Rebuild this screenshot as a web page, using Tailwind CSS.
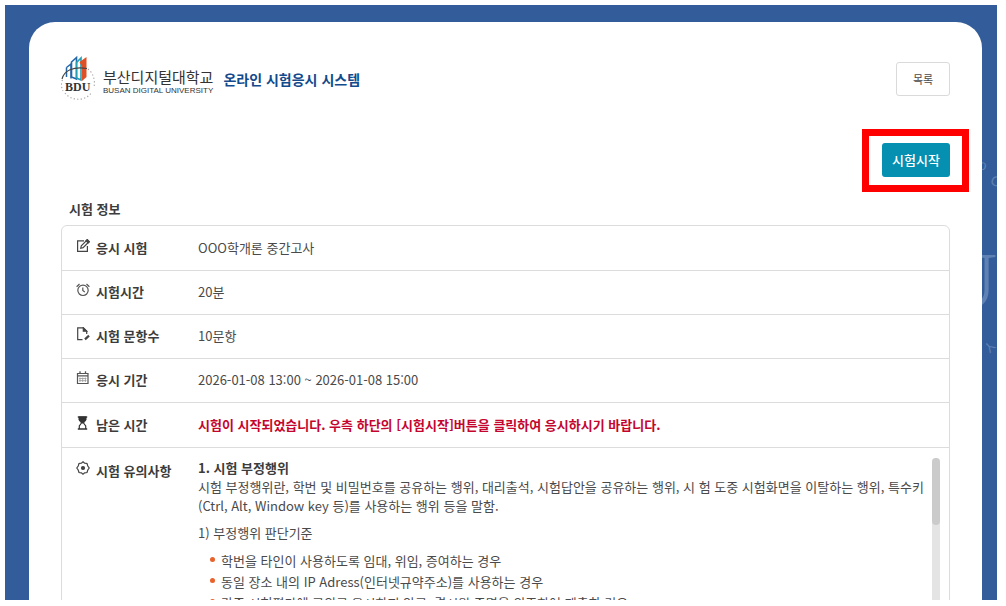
<!DOCTYPE html>
<html lang="ko">
<head>
  <meta charset="UTF-8" />
  <meta name="viewport" content="width=device-width, initial-scale=1.0"/>
  <title>온라인 시험응시 시스템</title>
  <script src="https://cdn.jsdelivr.net/npm/@tailwindcss/browser@4"></script>
</head>
<body class="h-screen bg-white pt-[5px] pr-[9px] pb-[6px] pl-[5px] font-['Noto_Sans_CJK_KR',sans-serif] text-[13px] text-[#4a4a4a]">
  <div class="relative h-full overflow-hidden bg-[#325d9a] pt-[17px] pr-[15px] pl-6">
    <!-- backdrop lettering -->
    <div aria-hidden="true" class="absolute inset-0 font-['Liberation_Serif',serif] text-[#5f81b3]">
      <span class="absolute right-0 top-[236px] text-[80px] leading-[80px]">U</span>
      <span class="absolute right-[10px] top-[152px] rotate-12 font-['Liberation_Sans',sans-serif] text-sm leading-4">o</span>
      <span class="absolute -right-[4px] top-[168px] rotate-20 font-['Liberation_Sans',sans-serif] text-sm leading-4">C</span>
      <span class="absolute right-[3px] top-[334px] rotate-135 font-['Liberation_Sans',sans-serif] text-sm leading-4">Y</span>
    </div>

    <main class="relative h-[800px] rounded-t-[26px] bg-white pt-[33px] pr-8 pl-8">
      <header class="flex h-12 items-center justify-between">
        <div class="flex items-center">
          <svg class="mr-2 h-12 w-[34px]" viewBox="0 0 34 48" fill="none">
            <path d="M5.500 12.500 10 9V23.500M5.500 12.500V22" stroke="#2466a8" stroke-width="1.500"/>
            <path d="M10.500 7 15.500 2.500V24L10.500 22Z" stroke="#2466a8" stroke-width="1.600"/>
            <path d="M15.500 7.500 20 3V25L15.500 23Z" stroke="#24a0b5" stroke-width="1.600"/>
            <path d="M18.500 7 25.500 2V22L21 26V12Z" fill="#de5126"/>
            <path d="M1 24C3 16 12 11 26 13.500" stroke="#444" stroke-width="1.100"/>
            <path d="M27 14C32 18 34.500 25 33 32M4 38C10 46 24 47 31 37M1.500 25C0 28 0 32 2 36" stroke="#aaa" stroke-width="1.200" stroke-dasharray="1.300 2.200"/>
            <text x="4" y="36" font-family="Liberation Serif" font-size="12" font-weight="700" fill="#333">BDU</text>
          </svg>
          <div class="pt-1 text-[#333]">
            <div class="text-[15px] leading-[18px]">부산디지털대학교</div>
            <div class="font-['Liberation_Sans',sans-serif] text-[8px] leading-[9px]">BUSAN DIGITAL UNIVERSITY</div>
          </div>
          <h1 class="ml-[10px] text-sm font-bold text-[#124a8c]">온라인 시험응시 시스템</h1>
        </div>
        <button type="button" class="h-[34px] w-[54px] rounded-[3px] border border-[#dadada] text-[11px]">목록</button>
      </header>

      <div class="mt-10 flex justify-end">
        <div class="relative">
          <button type="button" class="block h-[34px] w-[68px] rounded-[3px] bg-[#058fb1] text-[13px] font-medium text-white">시험시작</button>
          <span class="pointer-events-none absolute -top-[14px] -right-[19px] -bottom-[15px] -left-5 border-[7px] border-[#fe0000]"></span>
        </div>
      </div>

      <h2 class="mt-[22px] pl-2 leading-5 font-bold text-[#3c3c3c]">시험 정보</h2>

      <div class="mt-[6px] h-[500px] rounded-t-md border border-[#dcdcdc]">
        <table class="w-full table-fixed text-left">
          <colgroup><col class="w-[136px]"/><col/></colgroup>
          <tbody>
            <tr class="h-[44px] border-b border-[#dcdcdc]">
              <th scope="row" class="pl-[14px] font-bold text-[#3c3c3c]">
                <div class="flex items-center gap-[6px]">
                  <svg class="mb-1 size-[14px]" viewBox="0 0 14 14" fill="none" stroke="#444" stroke-width="1.2"><path d="M8 1.8H1.6V12.4H11.4V7"/><path d="M4.7 9.3 5.3 6.9 11 1.2 12.8 3 7.1 8.7Z"/><path d="m10 1.8 1.3-1.2L13.4 2.700 12.200 4Z" fill="#444"/></svg>
                  <span>응시 시험</span>
                </div>
              </th>
              <td>OOO학개론 중간고사</td>
            </tr>
            <tr class="h-[44px] border-b border-[#dcdcdc]">
              <th scope="row" class="pl-[14px] font-bold text-[#3c3c3c]">
                <div class="flex items-center gap-[6px]">
                  <svg class="mb-1 size-[14px]" viewBox="0 0 14 14" fill="none" stroke="#555" stroke-width="1.2"><circle cx="7" cy="7.300" r="5.200"/><path d="M6.800 4.500V7.500L8.800 9M.6 3.700 3.500 1M13.400 3.700 10.500 1"/></svg>
                  <span>시험시간</span>
                </div>
              </th>
              <td>20분</td>
            </tr>
            <tr class="h-[44px] border-b border-[#dcdcdc]">
              <th scope="row" class="pl-[14px] font-bold text-[#3c3c3c]">
                <div class="flex items-center gap-[6px]">
                  <svg class="mb-1 size-[14px]" viewBox="0 0 14 14" fill="none" stroke="#444" stroke-width="1.2"><path d="M6.500 12.700H1.700V.8H7.300L10.700 4.200V7"/><path d="M7.300.8V4.200H10.700Z" fill="#444"/><path d="m9 12.400 4-3.800" stroke-width="2.200"/></svg>
                  <span>시험 문항수</span>
                </div>
              </th>
              <td>10문항</td>
            </tr>
            <tr class="h-[44px] border-b border-[#dcdcdc]">
              <th scope="row" class="pl-[14px] font-bold text-[#3c3c3c]">
                <div class="flex items-center gap-[6px]">
                  <svg class="mb-1 size-[14px]" viewBox="0 0 14 14" fill="none" stroke="#555"><path d="M1.500 2.500H12V12.500H1.500ZM1.500 4.800H12" stroke-width="1.200"/><path d="M4 .3V3M9.500.3V3" stroke-width="1.300"/><path d="M4 6.500V11M6.700 6.500V11M9.400 6.500V11M3 7.500H10.500M3 9.600H10.500" stroke="#999" stroke-width=".8"/></svg>
                  <span>응시 기간</span>
                </div>
              </th>
              <td>2026-01-08 13:00 ~ 2026-01-08 15:00</td>
            </tr>
            <tr class="h-[45px] border-b border-[#dcdcdc]">
              <th scope="row" class="pl-[14px] font-bold text-[#3c3c3c]">
                <div class="flex items-center gap-[6px]">
                  <svg class="mb-1 size-[14px]" viewBox="0 0 14 14" fill="none" stroke="#333"><path d="M1.800 1H11.200M1.800 13H11.200" stroke-width="1.400"/><path d="M3 1H10V4L7.500 7H5.500L3 4Z" fill="#333"/><path d="M5.500 7 3.300 10V13M7.500 7 9.700 10V13" stroke-width="1.200"/></svg>
                  <span>남은 시간</span>
                </div>
              </th>
              <td class="font-bold text-[#c4052e]">시험이 시작되었습니다. 우측 하단의 [시험시작]버튼을 클릭하여 응시하시기 바랍니다.</td>
            </tr>
            <tr class="align-top">
              <th scope="row" class="pt-[13px] pl-[14px] font-bold text-[#3c3c3c]">
                <div class="flex items-center gap-[6px]">
                  <svg class="mb-1 size-[14px]" viewBox="0 0 14 14" fill="none" stroke="#444" stroke-width="1.200"><path d="M7 .8 8.600 2.200 11 2.500 11.800 5 13.200 7 11.800 9 11 11.500 8.600 11.800 7 13.200 5.400 11.800 3 11.500 2.200 9 .8 7 2.200 5 3 2.500 5.400 2.200Z"/><circle cx="7" cy="7" r="1.500" fill="#444"/></svg>
                  <span>시험 유의사항</span>
                </div>
              </th>
              <td class="pt-[10px] pr-[9px]">
                <div class="flex h-[300px] overflow-hidden">
                  <div class="min-w-0 flex-1 pr-1 leading-[19px]">
                    <h3 class="font-bold text-[#3c3c3c]">1. 시험 부정행위</h3>
                    <p>시험 부정행위란, 학번 및 비밀번호를 공유하는 행위, 대리출석, 시험답안을 공유하는 행위, 시 험 도중 시험화면을 이탈하는 행위, 특수키 (Ctrl, Alt, Window key 등)를 사용하는 행위 등을 말함.</p>
                    <p class="mt-2">1) 부정행위 판단기준</p>
                    <ul class="mt-2 leading-[21px]">
                      <li class="flex gap-[6px] pl-3"><span class="mt-[7px] size-[5px] rounded-full bg-[#e8622c]"></span>학번을 타인이 사용하도록 임대, 위임, 증여하는 경우</li>
                      <li class="flex gap-[6px] pl-3"><span class="mt-[7px] size-[5px] rounded-full bg-[#e8622c]"></span>동일 장소 내의 IP Adress(인터넷규약주소)를 사용하는 경우</li>
                      <li class="flex gap-[6px] pl-3"><span class="mt-[7px] size-[5px] rounded-full bg-[#e8622c]"></span>각종 시험평가에 고의로 응시하지 않고, 결시원 증명을 위조하여 제출한 경우</li>
                    </ul>
                  </div>
                  <div class="w-2 rounded-full bg-[#e4e4e4]">
                    <div class="h-[67px] rounded-full bg-[#cbcbcb]"></div>
                  </div>
                </div>
              </td>
            </tr>
          </tbody>
        </table>
      </div>
    </main>
  </div>
</body>
</html>
